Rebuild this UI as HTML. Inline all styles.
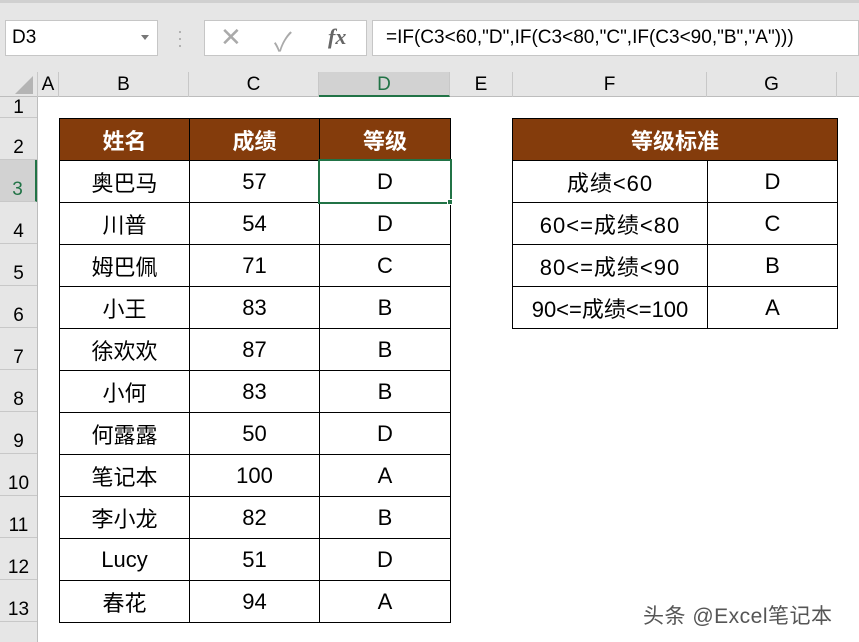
<!DOCTYPE html>
<html><head><meta charset="utf-8"><style>
*{margin:0;padding:0;box-sizing:border-box}
body{width:859px;height:642px;overflow:hidden;background:#fff;font-family:"Liberation Sans","Noto Sans CJK SC",sans-serif;position:relative}
.a{position:absolute}
.top{left:0;top:0;width:859px;height:72px;background:#e6e6e6}
.colh{left:0;top:72px;width:859px;height:25px;background:#e6e6e6;border-bottom:1px solid #bdbdbd}
.ch{position:absolute;top:72px;height:25px;line-height:25px;text-align:center;font-size:19px;color:#000;border-right:1px solid #c8c8c8}
.rowh{left:0;top:97px;width:38px;height:545px;background:#e6e6e6;border-right:1px solid #bdbdbd}
.rh{position:absolute;left:0;width:37px;text-align:center;font-size:19px;border-bottom:1px solid #c8c8c8;color:#000}
.c{position:absolute;text-align:center;font-size:22px;border:1px solid #000;display:flex;align-items:center;justify-content:center;color:#000}
.h{background:#843c0c;color:#fff;font-weight:bold}
.f{letter-spacing:1px}
</style></head><body>
<div class="a top"></div>
<div class="a" style="left:0;top:0;width:859px;height:3px;background:#d0d0d0"></div>
<div class="a" style="left:5px;top:20px;width:153px;height:36px;background:#fff;border:1px solid #c6c6c6;font-size:19px;line-height:34px;padding-left:6px">D3<span style="position:absolute;right:8px;top:14px;border:4px solid transparent;border-top:5px solid #777"></span></div>
<div class="a" style="left:177px;top:28px;color:#aaa;font-size:18px;line-height:7px">·<br>·<br>·</div>
<div class="a" style="left:204px;top:20px;width:163px;height:36px;background:#fff;border:1px solid #c6c6c6"></div>
<div class="a" style="left:220px;top:22px;font-size:26px;color:#aaa">✕</div>
<div class="a" style="left:274px;top:22px;font-size:26px;color:#aaa">✓</div>
<div class="a" style="left:328px;top:24px;font-size:22px;color:#666;font-family:'Liberation Serif',serif;font-style:italic;font-weight:bold">fx</div>
<div class="a" style="left:372px;top:20px;width:487px;height:36px;background:#fff;border:1px solid #c6c6c6;font-size:19px;line-height:34px;padding-left:13px">=IF(C3&lt;60,"D",IF(C3&lt;80,"C",IF(C3&lt;90,"B","A")))</div>
<div class="a colh"></div>
<div class="a" style="left:0;top:72px;width:38px;height:25px;border-right:1px solid #c8c8c8"><div style="position:absolute;right:4px;bottom:3px;width:0;height:0;border-left:18px solid transparent;border-bottom:18px solid #b4b4b4"></div></div>
<div class="ch" style="left:38px;width:21px">A</div>
<div class="ch" style="left:59px;width:130px">B</div>
<div class="ch" style="left:189px;width:130px">C</div>
<div class="ch" style="left:319px;width:131px;background:#d2d2d2;color:#217346;border-bottom:2px solid #217346">D</div>
<div class="ch" style="left:450px;width:63px">E</div>
<div class="ch" style="left:513px;width:194px">F</div>
<div class="ch" style="left:707px;width:130px">G</div>
<div class="a rowh"></div>
<div class="rh" style="top:97px;height:21px;line-height:21px">1</div>
<div class="rh" style="top:118px;height:42px;line-height:60px">2</div>
<div class="rh" style="top:160px;height:42px;line-height:60px;background:#d2d2d2;color:#217346;border-right:2px solid #217346">3</div>
<div class="rh" style="top:202px;height:42px;line-height:60px">4</div>
<div class="rh" style="top:244px;height:42px;line-height:60px">5</div>
<div class="rh" style="top:286px;height:42px;line-height:60px">6</div>
<div class="rh" style="top:328px;height:42px;line-height:60px">7</div>
<div class="rh" style="top:370px;height:42px;line-height:60px">8</div>
<div class="rh" style="top:412px;height:42px;line-height:60px">9</div>
<div class="rh" style="top:454px;height:42px;line-height:60px">10</div>
<div class="rh" style="top:496px;height:42px;line-height:60px">11</div>
<div class="rh" style="top:538px;height:42px;line-height:60px">12</div>
<div class="rh" style="top:580px;height:42px;line-height:60px">13</div>

<div class="c h" style="left:59px;top:118px;width:131px;height:43px">姓名</div>
<div class="c h" style="left:189px;top:118px;width:131px;height:43px">成绩</div>
<div class="c h" style="left:319px;top:118px;width:132px;height:43px">等级</div>

<div class="c" style="left:59px;top:160px;width:131px;height:43px">奥巴马</div><div class="c" style="left:189px;top:160px;width:131px;height:43px">57</div><div class="c" style="left:319px;top:160px;width:132px;height:43px">D</div>
<div class="c" style="left:59px;top:202px;width:131px;height:43px">川普</div><div class="c" style="left:189px;top:202px;width:131px;height:43px">54</div><div class="c" style="left:319px;top:202px;width:132px;height:43px">D</div>
<div class="c" style="left:59px;top:244px;width:131px;height:43px">姆巴佩</div><div class="c" style="left:189px;top:244px;width:131px;height:43px">71</div><div class="c" style="left:319px;top:244px;width:132px;height:43px">C</div>
<div class="c" style="left:59px;top:286px;width:131px;height:43px">小王</div><div class="c" style="left:189px;top:286px;width:131px;height:43px">83</div><div class="c" style="left:319px;top:286px;width:132px;height:43px">B</div>
<div class="c" style="left:59px;top:328px;width:131px;height:43px">徐欢欢</div><div class="c" style="left:189px;top:328px;width:131px;height:43px">87</div><div class="c" style="left:319px;top:328px;width:132px;height:43px">B</div>
<div class="c" style="left:59px;top:370px;width:131px;height:43px">小何</div><div class="c" style="left:189px;top:370px;width:131px;height:43px">83</div><div class="c" style="left:319px;top:370px;width:132px;height:43px">B</div>
<div class="c" style="left:59px;top:412px;width:131px;height:43px">何露露</div><div class="c" style="left:189px;top:412px;width:131px;height:43px">50</div><div class="c" style="left:319px;top:412px;width:132px;height:43px">D</div>
<div class="c" style="left:59px;top:454px;width:131px;height:43px">笔记本</div><div class="c" style="left:189px;top:454px;width:131px;height:43px">100</div><div class="c" style="left:319px;top:454px;width:132px;height:43px">A</div>
<div class="c" style="left:59px;top:496px;width:131px;height:43px">李小龙</div><div class="c" style="left:189px;top:496px;width:131px;height:43px">82</div><div class="c" style="left:319px;top:496px;width:132px;height:43px">B</div>
<div class="c" style="left:59px;top:538px;width:131px;height:43px">Lucy</div><div class="c" style="left:189px;top:538px;width:131px;height:43px">51</div><div class="c" style="left:319px;top:538px;width:132px;height:43px">D</div>
<div class="c" style="left:59px;top:580px;width:131px;height:43px">春花</div><div class="c" style="left:189px;top:580px;width:131px;height:43px">94</div><div class="c" style="left:319px;top:580px;width:132px;height:43px">A</div>

<div class="a" style="left:318px;top:159px;width:134px;height:45px;border:2px solid #217346"></div>
<div class="a" style="left:447px;top:199px;width:6px;height:6px;background:#217346;border:1px solid #fff"></div>

<div class="c h" style="left:512px;top:118px;width:326px;height:43px">等级标准</div>
<div class="c f" style="left:512px;top:160px;width:196px;height:43px">成绩&lt;60</div><div class="c" style="left:707px;top:160px;width:131px;height:43px">D</div>
<div class="c f" style="left:512px;top:202px;width:196px;height:43px">60&lt;=成绩&lt;80</div><div class="c" style="left:707px;top:202px;width:131px;height:43px">C</div>
<div class="c f" style="left:512px;top:244px;width:196px;height:43px">80&lt;=成绩&lt;90</div><div class="c" style="left:707px;top:244px;width:131px;height:43px">B</div>
<div class="c" style="left:512px;top:286px;width:196px;height:43px">90&lt;=成绩&lt;=100</div><div class="c" style="left:707px;top:286px;width:131px;height:43px">A</div>

<div class="a" style="left:643px;top:600px;font-size:21px;color:#555;letter-spacing:0.5px">头条 @Excel笔记本</div>
</body></html>
